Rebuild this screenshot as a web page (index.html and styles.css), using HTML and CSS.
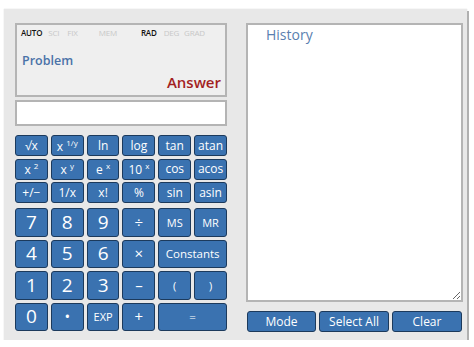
FILE: index.html
```html
<!DOCTYPE html>
<html lang="en">

<head>
  <meta charset="UTF-8">
  <meta name="viewport" content="width=device-width, initial-scale=1.0">
  <title>Calculator</title>
  <link rel="stylesheet" href="styles.css">
</head>

<body>
  <div class="calc">
    <div class="left">
      <div class="display">
        <div class="modes">
          <span class="on">AUTO</span>
          <span class="m-sci">SCI</span>
          <span class="m-fix">FIX</span>
          <span class="m-mem">MEM</span>
          <span class="on m-rad">RAD</span>
          <span class="m-deg">DEG</span>
          <span class="m-grad">GRAD</span>
        </div>
        <div class="problem">Problem</div>
        <div class="answer">Answer</div>
      </div>
      <input class="entry" type="text">

      <div class="keys sci">
        <button class="btn">&radic;x</button>
        <button class="btn">x <sup>1/y</sup></button>
        <button class="btn">ln</button>
        <button class="btn">log</button>
        <button class="btn">tan</button>
        <button class="btn">atan</button>
        <button class="btn">x <sup>2</sup></button>
        <button class="btn">x <sup>y</sup></button>
        <button class="btn">e <sup>x</sup></button>
        <button class="btn">10 <sup>x</sup></button>
        <button class="btn">cos</button>
        <button class="btn">acos</button>
        <button class="btn">+/&minus;</button>
        <button class="btn">1/x</button>
        <button class="btn">x!</button>
        <button class="btn">%</button>
        <button class="btn">sin</button>
        <button class="btn">asin</button>
      </div>

      <div class="keys nums">
        <button class="btn big">7</button>
        <button class="btn big">8</button>
        <button class="btn big">9</button>
        <button class="btn op">&divide;</button>
        <button class="btn small">MS</button>
        <button class="btn small">MR</button>
        <button class="btn big">4</button>
        <button class="btn big">5</button>
        <button class="btn big">6</button>
        <button class="btn op">&times;</button>
        <button class="btn wide">Constants</button>
        <button class="btn big">1</button>
        <button class="btn big">2</button>
        <button class="btn big">3</button>
        <button class="btn op">&ndash;</button>
        <button class="btn small">(</button>
        <button class="btn small">)</button>
        <button class="btn big">0</button>
        <button class="btn op">&bull;</button>
        <button class="btn small">EXP</button>
        <button class="btn op">+</button>
        <button class="btn wide">=</button>
      </div>
    </div>

    <div class="right">
      <textarea class="history" placeholder="History"></textarea>
      <div class="actions">
        <button class="btn">Mode</button>
        <button class="btn">Select All</button>
        <button class="btn">Clear</button>
      </div>
    </div>
  </div>
</body>

</html>
```

FILE: styles.css
```css
body {
  margin: 0;
  background-color: #ffffff;
  font-family: "Open Sans", Arial, sans-serif;
}

.calc {
  display: flex;
  width: 463px;
  height: 331px;
  margin: 9px 0 0 4px;
  padding: 14px 4px 0 11px;
  box-sizing: border-box;
  background-color: #e8e8e8;
  box-shadow: 2px 2px 0 #b0b0b0, 0 0 1px #d0d0d0;
}

.left {
  display: flex;
  flex-direction: column;
  width: 212px;
}

.display {
  height: 74px;
  box-sizing: border-box;
  border: 2px solid #b4b4b4;
  background-color: #efefef;
  padding: 1px 4px 0 4px;
}

.modes {
  display: flex;
  font-size: 8px;
  line-height: 14px;
  color: #c8c8c8;
  letter-spacing: -0.2px;
}

.modes .on {
  color: #111111;
  font-weight: 600;
}

.m-sci { margin-left: 6px; }
.m-fix { margin-left: 8px; }
.m-mem { margin-left: 21px; }
.m-rad { margin-left: 24px; }
.m-deg { margin-left: 7px; }
.m-grad { margin-left: 5px; }

.problem {
  margin-top: 12px;
  margin-left: 1px;
  font-size: 12.5px;
  font-weight: 600;
  color: #4a72a8;
}

.answer {
  margin-top: 3px;
  text-align: right;
  font-size: 15px;
  font-weight: 600;
  color: #a31f1f;
}

.entry {
  height: 26px;
  margin: 3px 0 0 0;
  box-sizing: border-box;
  border: 2px solid #b4b4b4;
  background-color: #ffffff;
  outline: none;
}

.keys {
  display: grid;
  grid-template-columns: repeat(6, 1fr);
  column-gap: 3px;
}

.sci {
  margin-top: 9px;
  grid-auto-rows: 21px;
  row-gap: 2.5px;
}

.nums {
  margin-top: 5px;
  grid-auto-rows: 28.5px;
  row-gap: 3px;
}

.btn {
  margin: 0;
  padding: 0;
  border: 1px solid #1c3a5c;
  border-radius: 3px;
  background-color: #3a72b0;
  color: #ffffff;
  font-family: "Open Sans", Arial, sans-serif;
  font-size: 12px;
  line-height: 1;
  white-space: nowrap;
}

.btn sup {
  font-size: 8px;
  vertical-align: 5px;
}

.big {
  font-size: 19px;
}

.op {
  font-size: 15px;
}

.small {
  font-size: 11px;
}

.wide {
  grid-column: span 2;
  font-size: 11.5px;
}

.right {
  display: flex;
  flex-direction: column;
  width: 217px;
  margin-left: 19px;
}

.history {
  height: 279px;
  margin: 0;
  box-sizing: border-box;
  border: 2px solid #b4b4b4;
  padding: 0 18px;
  background-color: #ffffff;
  font-family: "Open Sans", Arial, sans-serif;
  font-size: 14px;
  resize: vertical;
  outline: none;
}

.history::placeholder {
  color: #5a7fb0;
}

.actions {
  display: grid;
  grid-template-columns: 69px 70px 70px;
  column-gap: 3px;
  margin-top: 9px;
  margin-left: 1px;
}

.actions .btn {
  height: 21px;
  font-size: 12px;
}
```
